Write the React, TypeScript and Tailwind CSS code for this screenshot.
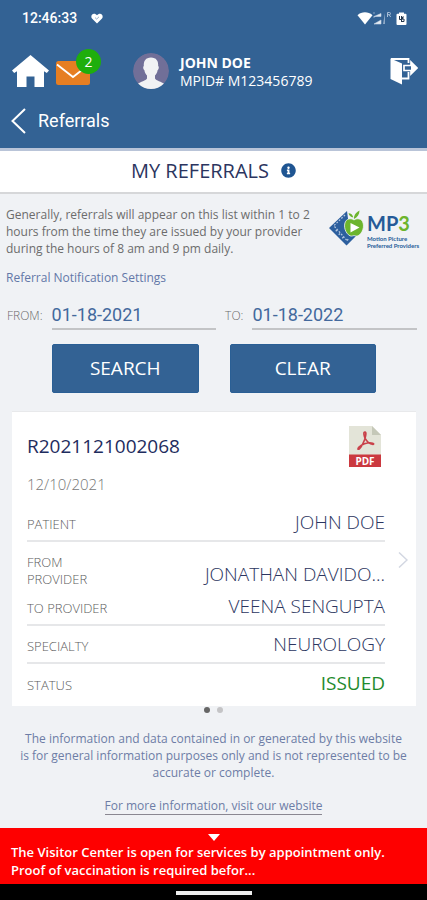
import { FaInfoCircle } from 'react-icons/fa';

interface ReferralField {
	label: string;
	value: string;
}

interface Referral {
	id: string;
	date: string;
	patient: string;
	fromProvider: string;
	toProvider: string;
	specialty: string;
	status: string;
}

const referral: Referral = {
	id: 'R2021121002068',
	date: '12/10/2021',
	patient: 'JOHN DOE',
	fromProvider: 'JONATHAN DAVIDO...',
	toProvider: 'VEENA SENGUPTA',
	specialty: 'NEUROLOGY',
	status: 'ISSUED',
};

const StatusBar = () => (
	<div className="flex h-9 items-center pl-[22px] pr-5 font-['Roboto',sans-serif] text-white">
		<span className="text-sm font-medium">12:46:33</span>
		<svg className="ml-[14px] h-[11px] w-3" viewBox="0 0 12 11">
			<path
				d="M6 10.6 1 5.6C-.4 3.8.5.9 3 .8 4.300.8 5.300 1.400 6 2.300 6.700 1.400 7.700.8 9 .8c2.500.1 3.400 3 2 4.800z"
				fill="#fff"
			/>
			<path d="m4 4.600 1.700 1.500 2.300-2.300" fill="none" stroke="#7f9dbf" strokeWidth=".8" />
		</svg>
		<svg className="ml-auto h-4 w-[50px]" viewBox="0 0 50 16">
			<path d="M.5 5.200C4.800 1.400 11 1.400 15.500 5.200L8 14.500z" fill="#fff" />
			<path d="M16 3h2M16 7h2M17 6.500h7v-3zM17 14h7v-4z" fill="#e3eaf2" stroke="#c6d4e4" strokeWidth=".6" />
			<path d="M26 14h2V3z" fill="#8ea9c7" />
			<path
				d="M30.500 7V2.500h2q1 0 1 1.100t-1 1.100h-2m1.600 0 1.600 2.300"
				fill="none"
				stroke="#a9bfd7"
			/>
			<path d="M42 2.500h5v1.200h1.500q1 0 1 1V14q0 1-1 1h-8q-1 0-1-1V4.700q0-1 1-1H42z" fill="#fff" />
			<path d="M42.500 6v3.500h3M44.500 6v6M47 7h-1.500v2H47v2.500h-2" fill="none" stroke="#23364d" />
		</svg>
	</div>
);

const HomeIcon = () => (
	<svg className="h-8 w-[37px]" viewBox="0 0 37 32" fill="#fff">
		<path d="M18.500 0 37 15.500 34.800 18 32 16.300V32H22.500V21.500h-8V32H5V16.300L2.200 18 0 15.500z" />
	</svg>
);

const MailIcon = () => (
	<svg className="h-6 w-[34px]" viewBox="0 0 34 24">
		<rect width="34" height="24" rx="2.500" fill="#e67e22" />
		<path d="m1 3.500 16 12.500L33 3.500" fill="none" stroke="#fff" strokeWidth="1.800" />
	</svg>
);

const Avatar = () => (
	<svg className="size-9 shrink-0" viewBox="0 0 36 36">
		<clipPath id="avatarClip">
			<circle cx="18" cy="18" r="18" />
		</clipPath>
		<g clipPath="url(#avatarClip)">
			<circle cx="18" cy="18" r="18" fill="#716f98" />
			<path
				d="M18 4.500c5.300 0 7.500 3.500 7.200 8.500 1 .5.8 3.500-.6 4.300-.4 2.500-1.300 4-2.600 5.200v3c1 2.300 6.500 3 9.500 5.500L28 36H8l-3.500-5C7.500 28.500 13 27.800 14 25.500v-3c-1.300-1.200-2.200-2.700-2.600-5.200-1.400-.8-1.600-3.800-.6-4.300C10.500 8 12.700 4.500 18 4.500z"
				fill="#f1f2f4"
			/>
		</g>
	</svg>
);

const LogoutIcon = () => (
	<svg className="h-7 w-7" viewBox="0 0 28 28">
		<path d="M1 2h17.500v4M18.500 15v6.500H12" fill="none" stroke="#fff" strokeWidth="1.800" />
		<path d="M.5 1.500 12 6.500V27.500L.5 22z" fill="#fff" />
		<path d="M14 8.500h7V5l6 6-6 6v-3.500h-7z" fill="#336294" stroke="#fff" strokeWidth="1.700" />
		<path d="M21 5.500 27 11l-6 5.500z" fill="#fff" />
	</svg>
);

const Mp3Logo = () => (
	<div className="flex w-[94px] shrink-0 gap-[3px]">
		<svg className="mt-1 h-9 w-[35px] shrink-0" viewBox="0 0 35 36">
			<path d="M18 1 0 18l17.500 17.500L31 22 20 16z" fill="#2c5f9e" />
			<path
				d="m5.500 16.500 12.500 14M16 5 4.500 16M8 20l-2 2M11 23.500l-2 2M14.500 27l-2 2M18 30.500l2-2"
				stroke="#b7c9e0"
				strokeWidth="1.200"
				strokeDasharray="1.800 1.500"
				fill="none"
			/>
			<path
				d="M25 10c2.500-2 6.500-1.500 8.300 1.200 2.800 4.600.3 12.300-4.300 14.600-1.700.8-2.700-.2-4-.2s-2.300 1-4 .2c-4.600-2.300-7.100-10-4.300-14.600C18.500 8.500 22.500 8 25 10z"
				fill="#6cb52d"
				stroke="#f0f2f5"
				strokeWidth=".8"
			/>
			<path d="M25 9C24.800 6 26 3 30.500.5 30.500 4.500 28.500 7 25 9zM24.300 7.500C21.500 7 20 5.500 19.500 3.300c2.500 0 4.300 1.500 4.800 4.200z" fill="#6cb52d" />
			<path d="m21.500 13 9 4.500-9 5z" fill="#fff" />
		</svg>
		<div className="pt-[6px] font-['Lato',sans-serif] font-bold text-[#255b98]">
			<p className="text-[20px] leading-[23px]">
				MP<span className="text-[#6cb52d]">3</span>
			</p>
			<p className="text-[6px] leading-[7px] whitespace-nowrap">
				Motion Picture
				<br />
				Preferred Providers
			</p>
		</div>
	</div>
);

const PdfIcon = () => (
	<svg className="h-[41px] w-8" viewBox="0 0 32 41">
		<path d="M0 0h23l9 9v32H0z" fill="#e3e4d8" />
		<path d="M23 0v9h9z" fill="#c5c8b8" />
		<path
			d="M16 6c-2 0-.8 4 .3 6.500C18 16 21 18 24 18.300c2-.3-1-2-5.500-1.300-4 .5-9 3.500-9.500 6 1.500 1.300 4.500-4 6.500-9C16.800 10 17.500 6 16 6z"
			fill="none"
			stroke="#c9414a"
			strokeWidth="1.700"
		/>
		<path d="M0 28.500h32V41H0z" fill="#cb393f" />
		<text
			x="16"
			y="38.500"
			textAnchor="middle"
			fill="#fff"
			fontFamily="Open Sans, sans-serif"
			fontSize="10"
			fontWeight="700"
		>
			PDF
		</text>
	</svg>
);

const DateField = ({ id, label, value }: { id: string; label: string; value: string }) => (
	<>
		<label htmlFor={id} className="pt-px text-xs font-light text-[#6b6b6b]">
			{label}
		</label>
		<input
			id={id}
			type="text"
			defaultValue={value}
			className="h-[30px] w-full min-w-0 border-b-2 border-[#c3c4c6] bg-transparent font-['Roboto',sans-serif] text-lg text-[#43699d] outline-none"
		/>
	</>
);

const FieldRow = ({ label, value }: ReferralField) => (
	<div className="flex h-[38px] items-center justify-between border-b-2 border-[#e6e7e9]">
		<dt className="pt-[6px] text-[13px] font-light text-[#5c5c5c]">{label}</dt>
		<dd className="text-[19px] font-light text-[#2b3560]">{value}</dd>
	</div>
);

const ReferralCard = ({ data }: { data: Referral }) => (
	<article className="relative mr-[11px] ml-3 border-t border-[#e8e9eb] bg-white pr-[31px] pl-[15px]">
		<div className="flex items-start justify-between pt-[14px] pr-1">
			<div>
				<h2 className="pt-2 text-[19px] leading-6 text-[#1e2c5e]">{data.id}</h2>
				<p className="pt-4 text-[15px] leading-5 font-light text-[#777]">{data.date}</p>
			</div>
			<button type="button" aria-label="Download PDF">
				<PdfIcon />
			</button>
		</div>
		<dl className="pt-[10px] pb-1">
			<FieldRow label="PATIENT" value={data.patient} />
			<div className="flex h-[50px] items-end justify-between">
				<dt className="w-20 pb-1 text-[13px] leading-[17px] font-light text-[#5c5c5c]">
					FROM PROVIDER
				</dt>
				<dd className="pb-1 text-[19px] font-light text-[#2b3560]">{data.fromProvider}</dd>
			</div>
			<div className="flex h-[34px] items-start justify-between border-b-2 border-[#e6e7e9]">
				<dt className="pt-[7px] text-[13px] font-light text-[#5c5c5c]">TO PROVIDER</dt>
				<dd className="text-[19px] font-light text-[#2b3560]">{data.toProvider}</dd>
			</div>
			<FieldRow label="SPECIALTY" value={data.specialty} />
			<div className="flex h-[38px] items-center justify-between">
				<dt className="pt-[6px] text-[13px] font-light text-[#5c5c5c]">STATUS</dt>
				<dd className="text-[19px] text-[#1f8a2d]">{data.status}</dd>
			</div>
		</dl>
		<button type="button" aria-label="Next referral" className="absolute top-[140px] right-2">
			<svg className="h-4 w-[10px]" viewBox="0 0 10 16">
				<path d="m1 .5 8 7.500-8 7.500" fill="none" stroke="#d3d7e2" strokeWidth="1.500" />
			</svg>
		</button>
	</article>
);

const App = () => {
	return (
		<div className="flex min-h-screen w-full flex-col bg-[#f0f2f5] font-['Open_Sans',sans-serif]">
			<header className="border-b-[3px] border-[#b9c4d8] bg-[#336294] text-white">
				<StatusBar />
				<div className="flex h-[70px] items-center pr-[9px] pl-3">
					<a href="#home" aria-label="Home">
						<HomeIcon />
					</a>
					<a href="#messages" aria-label="2 messages" className="relative ml-[7px] pt-1">
						<MailIcon />
						<span className="absolute -top-2 left-5 flex size-[25px] items-center justify-center rounded-full bg-[#1fae0c] text-sm">
							2
						</span>
					</a>
					<div className="ml-[43px] flex items-center gap-[11px]">
						<Avatar />
						<div className="pt-[2px] text-sm leading-[18px]">
							<p className="font-bold">JOHN DOE</p>
							<p>MPID# M123456789</p>
						</div>
					</div>
					<button type="button" aria-label="Log out" className="ml-auto">
						<LogoutIcon />
					</button>
				</div>
				<div className="pb-3">
					<button type="button" className="flex h-[30px] items-center gap-3 pl-[11px]">
						<svg className="h-[26px] w-[15px]" viewBox="0 0 15 26">
							<path d="M14 1 1.500 13 14 25" fill="none" stroke="#fff" strokeWidth="2" />
						</svg>
						<span className="font-['Roboto',sans-serif] text-lg">Referrals</span>
					</button>
				</div>
			</header>

			<main className="flex flex-1 flex-col">
				<div className="flex h-[43px] items-center justify-center gap-3 border-b-2 border-[#d6d7d9] bg-white pb-[2px]">
					<h1 className="text-xl text-[#2b3560]">MY REFERRALS</h1>
					<button type="button" aria-label="About referrals">
						<FaInfoCircle className="size-[15px] text-[#1f5592]" />
					</button>
				</div>

				<div className="flex justify-between pt-3 pr-1 pl-[6px]">
					<p className="w-[320px] text-xs leading-[17px] text-[#6c6c6c]">
						Generally, referrals will appear on this list within 1 to 2 hours from the time
						they are issued by your provider during the hours of 8 am and 9 pm daily.
					</p>
					<Mp3Logo />
				</div>
				<a href="#settings" className="mt-3 ml-[6px] self-start text-xs leading-[17px] text-[#6378a8]">
					Referral Notification Settings
				</a>

				<form onSubmit={(e) => e.preventDefault()}>
					<div className="grid grid-cols-[auto_1fr_auto_1fr] items-center gap-[9px] pt-[14px] pr-[10px] pl-[7px]">
						<DateField id="from" label="FROM:" value="01-18-2021" />
						<DateField id="to" label="TO:" value="01-18-2022" />
					</div>
					<div className="flex gap-[31px] pt-[14px] pr-[51px] pl-[52px]">
						<button
							type="submit"
							className="h-[49px] flex-1 rounded-xs border border-[#2a5f95] bg-[#336294] text-[19px] text-white"
						>
							SEARCH
						</button>
						<button
							type="reset"
							className="h-[49px] flex-1 rounded-xs border border-[#2a5f95] bg-[#336294] text-[19px] text-white"
						>
							CLEAR
						</button>
					</div>
				</form>

				<section className="pt-[18px]">
					<ReferralCard data={referral} />
					<div className="flex justify-center gap-[7px] pt-px">
						<span className="size-[6px] rounded-full bg-[#666]" />
						<span className="size-[6px] rounded-full bg-[#c4c4c6]" />
					</div>
				</section>

				<div className="px-3 pt-[17px] text-center text-xs leading-[17px] text-[#6d7da6]">
					<p>
						The information and data contained in or generated by this website
						<br />
						is for general information purposes only and is not represented to be accurate or
						complete.
					</p>
					<a href="#website" className="mt-4 inline-block border-b border-[#8a8791]">
						For more information, visit our website
					</a>
				</div>
			</main>

			<footer>
				<div className="h-14 bg-[#fe0000] px-[11px] pt-[6px]">
					<svg className="mx-auto h-[7px] w-3" viewBox="0 0 12 7">
						<path d="M0 0h12L6 7z" fill="#fff" />
					</svg>
					<p className="pt-[2px] text-[13px] leading-[18px] font-semibold text-white">
						The Visitor Center is open for services by appointment only.
						<br />
						Proof of vaccination is required befor...
					</p>
				</div>
				<div className="flex h-4 items-center justify-center bg-black pt-[2px]">
					<span className="h-1 w-[76px] bg-[#eee]" />
				</div>
			</footer>
		</div>
	);
};

export default App;
